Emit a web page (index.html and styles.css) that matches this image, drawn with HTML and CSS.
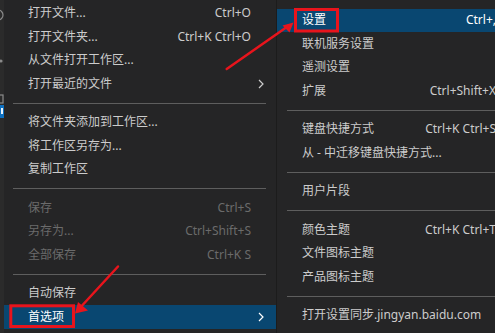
FILE: index.html
```html
<!DOCTYPE html>
<html lang="zh-CN">
<head>
<meta charset="utf-8">
<title>首选项</title>
<link rel="stylesheet" href="styles.css">
</head>
<body>
<div class="screen">
  <div class="activity">
    <svg class="activity-icons" width="4" height="333" viewBox="0 0 4 333">
      <circle cx="-2" cy="15" r="5" fill="none" stroke="#8a8a8a" stroke-width="1.2"/>
      <circle cx="1" cy="61" r="1.6" fill="#8a8a8a"/>
      <rect x="-4" y="95" width="7" height="8" fill="none" stroke="#8a8a8a" stroke-width="1.2"/>
      <rect x="0" y="105" width="4" height="13" fill="#0e70c0"/>
      <rect x="1" y="108" width="2" height="6" fill="#e8f2fb"/>
    </svg>
  </div>

  <div class="menu menu-main">
    <div class="item"><span class="label">打开文件...</span><span class="key">Ctrl+O</span><span class="sub"></span></div>
    <div class="item"><span class="label">打开文件夹...</span><span class="key">Ctrl+K Ctrl+O</span><span class="sub"></span></div>
    <div class="item"><span class="label">从文件打开工作区...</span><span class="key"></span><span class="sub"></span></div>
    <div class="item"><span class="label">打开最近的文件</span><span class="key"></span><span class="sub"><svg class="chev" width="6" height="10" viewBox="0 0 6 10"><path d="M1 1 L5 5 L1 9" fill="none" stroke="#cccccc" stroke-width="1.2"/></svg></span></div>
    <div class="sep"></div>
    <div class="item"><span class="label">将文件夹添加到工作区...</span><span class="key"></span><span class="sub"></span></div>
    <div class="item"><span class="label">将工作区另存为...</span><span class="key"></span><span class="sub"></span></div>
    <div class="item"><span class="label">复制工作区</span><span class="key"></span><span class="sub"></span></div>
    <div class="sep"></div>
    <div class="item disabled"><span class="label">保存</span><span class="key">Ctrl+S</span><span class="sub"></span></div>
    <div class="item disabled"><span class="label">另存为...</span><span class="key">Ctrl+Shift+S</span><span class="sub"></span></div>
    <div class="item disabled"><span class="label">全部保存</span><span class="key">Ctrl+K S</span><span class="sub"></span></div>
    <div class="sep"></div>
    <div class="item"><span class="label">自动保存</span><span class="key"></span><span class="sub"></span></div>
    <div class="item active"><span class="label">首选项</span><span class="key"></span><span class="sub"><svg class="chev" width="6" height="10" viewBox="0 0 6 10"><path d="M1 1 L5 5 L1 9" fill="none" stroke="#ffffff" stroke-width="1.2"/></svg></span></div>
  </div>

  <div class="divider"></div>

  <div class="menu menu-sub">
    <div class="item active"><span class="label">设置</span><span class="key">Ctrl+,</span></div>
    <div class="item"><span class="label">联机服务设置</span><span class="key"></span></div>
    <div class="item"><span class="label">遥测设置</span><span class="key"></span></div>
    <div class="item"><span class="label">扩展</span><span class="key">Ctrl+Shift+X</span></div>
    <div class="sep"></div>
    <div class="item"><span class="label">键盘快捷方式</span><span class="key">Ctrl+K Ctrl+S</span></div>
    <div class="item"><span class="label">从 - 中迁移键盘快捷方式...</span><span class="key"></span></div>
    <div class="sep"></div>
    <div class="item"><span class="label">用户片段</span><span class="key"></span></div>
    <div class="sep"></div>
    <div class="item"><span class="label">颜色主题</span><span class="key">Ctrl+K Ctrl+T</span></div>
    <div class="item"><span class="label">文件图标主题</span><span class="key"></span></div>
    <div class="item"><span class="label">产品图标主题</span><span class="key"></span></div>
    <div class="sep"></div>
    <div class="item"><span class="label">打开设置同步.jingyan.baidu.com</span><span class="key"></span></div>
  </div>

  <svg class="annot" width="495" height="333" viewBox="0 0 495 333">
    <rect x="295.5" y="9.5" width="42" height="21.5" fill="none" stroke="#e8141c" stroke-width="3"/>
    <rect x="10.8" y="305.8" width="62.7" height="20.7" fill="none" stroke="#e8141c" stroke-width="3"/>
    <line x1="226.7" y1="69" x2="289" y2="25.5" stroke="#e8141c" stroke-width="2.5" stroke-linecap="round"/>
    <polygon points="293.5,22.5 282.5,25.5 289.5,32.5" fill="#e8141c"/>
    <line x1="118" y1="266.5" x2="78" y2="310" stroke="#e8141c" stroke-width="2.5" stroke-linecap="round"/>
    <polygon points="75,313.5 78,302 88,310.5" fill="#e8141c"/>
  </svg>
</div>
</body>
</html>
```
FILE: styles.css
```css
html, body {
  margin: 0;
  padding: 0;
  background: #252526;
}

.screen {
  position: relative;
  width: 495px;
  height: 333px;
  overflow: hidden;
  display: flex;
  align-items: flex-start;
  background: #252526;
  font-family: "Noto Sans", "Noto Sans CJK SC", sans-serif;
  font-size: 12px;
  color: #cccccc;
}

.activity {
  flex: 0 0 4px;
  width: 4px;
  height: 333px;
  background: #2b2b2b;
}

.activity-icons {
  display: block;
}

.menu {
  display: flex;
  flex-direction: column;
  background: #252526;
  flex-shrink: 0;
}

.menu-main {
  width: 272px;
  padding-top: 1.5px;
}

.menu-sub {
  width: 245px;
  padding-top: 8.5px;
}

.divider {
  flex: 0 0 1px;
  width: 1px;
  height: 333px;
  background: #1c1c1c;
}

.item {
  display: flex;
  align-items: center;
  height: 23.5px;
  white-space: nowrap;
  line-height: 1;
}

.menu-main .item {
  padding-left: 24px;
}

.menu-sub .item {
  padding-left: 25px;
  padding-right: 26px;
}

.label {
  flex: 1;
}

.key {
  color: #cccccc;
}

.sub {
  width: 25px;
  display: flex;
  align-items: center;
}

.chev {
  display: block;
  margin-left: 7px;
}

.item.disabled,
.item.disabled .key {
  color: #6b6b6b;
}

.item.active {
  background: #094771;
  color: #ffffff;
}

.item.active .key {
  color: #ffffff;
}

.sep {
  height: 15px;
  display: flex;
  align-items: center;
}

.sep::before {
  content: "";
  display: block;
  flex: 1;
  height: 1px;
  background: #5e5e5e;
}

.menu-main .sep {
  margin: 0 10px 0 9px;
}

.menu-sub .sep {
  margin: 0 0 0 10px;
}

.annot {
  position: absolute;
  left: 0;
  top: 0;
  pointer-events: none;
}
```
